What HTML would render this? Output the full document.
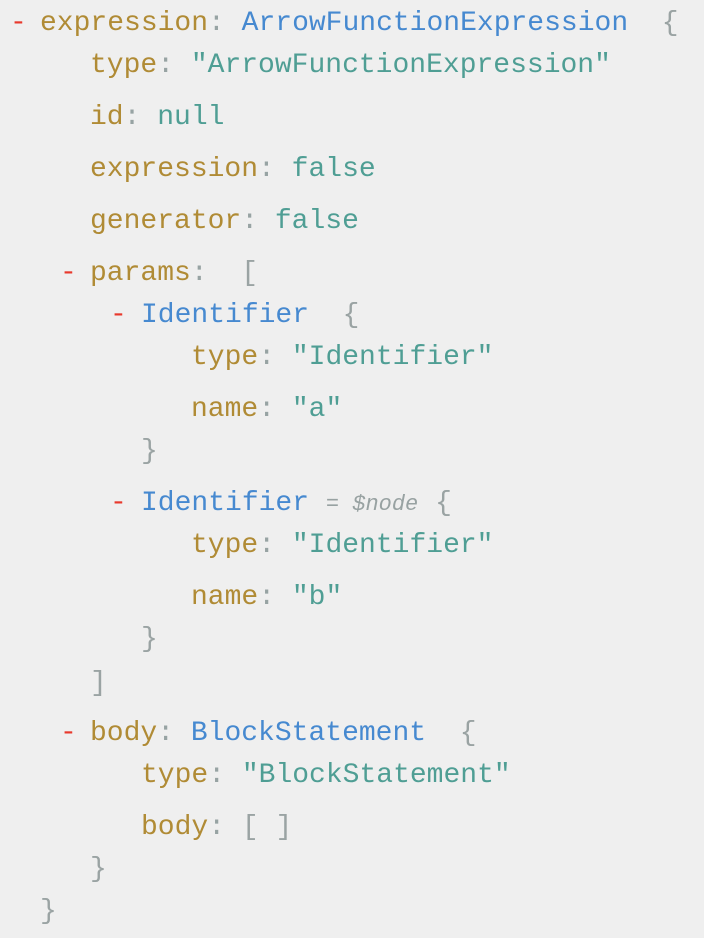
<!DOCTYPE html>
<html><head><meta charset="utf-8"><style>
html,body{margin:0;padding:0;background:#efefef;width:704px;height:938px;overflow:hidden}
.l{position:absolute;white-space:pre;font-family:"Liberation Mono",monospace;font-size:28px;line-height:32px;height:32px}
.k{color:#b08b35}.c{color:#97a3a3}.b{color:#4689d0}.s{color:#4f9e94}.r{color:#e8392c}.g{color:#9aa3a3}
.n{font-style:italic;font-size:22px;color:#98a2a2}
</style></head><body>
<div class="l r" style="left:10px;top:8px">-</div>
<div class="l" style="left:40px;top:8px"><span class="k">expression</span><span class="c">:</span> <span class="b">ArrowFunctionExpression</span>  <span class="g">{</span></div>
<div class="l" style="left:90px;top:50px"><span class="k">type</span><span class="c">:</span> <span class="s">"ArrowFunctionExpression"</span></div>
<div class="l" style="left:90px;top:102px"><span class="k">id</span><span class="c">:</span> <span class="s">null</span></div>
<div class="l" style="left:90px;top:154px"><span class="k">expression</span><span class="c">:</span> <span class="s">false</span></div>
<div class="l" style="left:90px;top:206px"><span class="k">generator</span><span class="c">:</span> <span class="s">false</span></div>
<div class="l r" style="left:60px;top:258px">-</div>
<div class="l" style="left:90px;top:258px"><span class="k">params</span><span class="c">:</span>  <span class="g">[</span></div>
<div class="l r" style="left:110px;top:300px">-</div>
<div class="l" style="left:141px;top:300px"><span class="b">Identifier</span>  <span class="g">{</span></div>
<div class="l" style="left:191px;top:342px"><span class="k">type</span><span class="c">:</span> <span class="s">"Identifier"</span></div>
<div class="l" style="left:191px;top:394px"><span class="k">name</span><span class="c">:</span> <span class="s">"a"</span></div>
<div class="l" style="left:141px;top:436px"><span class="g">}</span></div>
<div class="l r" style="left:110px;top:488px">-</div>
<div class="l" style="left:141px;top:488px"><span class="b">Identifier</span> <span class="n">= $node</span> <span class="g">{</span></div>
<div class="l" style="left:191px;top:530px"><span class="k">type</span><span class="c">:</span> <span class="s">"Identifier"</span></div>
<div class="l" style="left:191px;top:582px"><span class="k">name</span><span class="c">:</span> <span class="s">"b"</span></div>
<div class="l" style="left:141px;top:624px"><span class="g">}</span></div>
<div class="l" style="left:90px;top:668px"><span class="g">]</span></div>
<div class="l r" style="left:60px;top:718px">-</div>
<div class="l" style="left:90px;top:718px"><span class="k">body</span><span class="c">:</span> <span class="b">BlockStatement</span>  <span class="g">{</span></div>
<div class="l" style="left:141px;top:760px"><span class="k">type</span><span class="c">:</span> <span class="s">"BlockStatement"</span></div>
<div class="l" style="left:141px;top:812px"><span class="k">body</span><span class="c">:</span> <span class="g">[ ]</span></div>
<div class="l" style="left:90px;top:854px"><span class="g">}</span></div>
<div class="l" style="left:40px;top:896px"><span class="g">}</span></div>
</body></html>
